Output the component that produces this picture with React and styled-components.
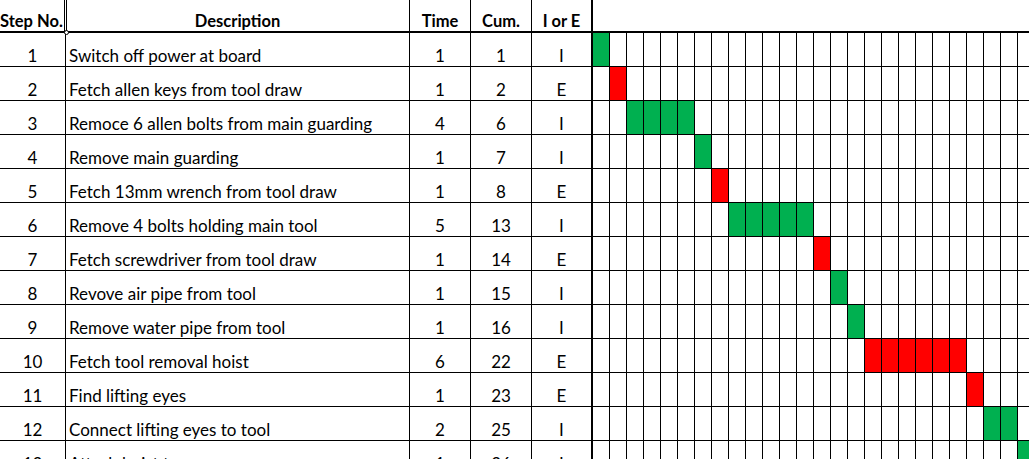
import React from 'react';
import styled, { createGlobalStyle } from 'styled-components';

const GlobalStyle = createGlobalStyle`
  html, body {
    margin: 0;
    padding: 0;
    background: #fff;
    overflow: hidden;
  }
  body {
    font-family: "Lato", "Liberation Sans", sans-serif;
    color: #000;
  }
`;

const GANTT_COLS = 26;
const GREEN = '#00b050';
const RED = '#ff0000';

const steps = [
  { desc: 'Switch off power at board', time: 1, type: 'I' },
  { desc: 'Fetch allen keys from tool draw', time: 1, type: 'E' },
  { desc: 'Remoce 6 allen bolts from main guarding', time: 4, type: 'I' },
  { desc: 'Remove main guarding', time: 1, type: 'I' },
  { desc: 'Fetch 13mm wrench from tool draw', time: 1, type: 'E' },
  { desc: 'Remove 4 bolts holding main tool', time: 5, type: 'I' },
  { desc: 'Fetch screwdriver from tool draw', time: 1, type: 'E' },
  { desc: 'Revove air pipe from tool', time: 1, type: 'I' },
  { desc: 'Remove water pipe from tool', time: 1, type: 'I' },
  { desc: 'Fetch tool removal hoist', time: 6, type: 'E' },
  { desc: 'Find lifting eyes', time: 1, type: 'E' },
  { desc: 'Connect lifting eyes to tool', time: 2, type: 'I' },
  { desc: 'Attach hoist to eyes', time: 1, type: 'I' },
];

const Sheet = styled.div`
  display: grid;
  grid-template-columns: 66px 344px 61px 61px 61px repeat(${GANTT_COLS}, 17px);
  grid-auto-rows: 34px;
  grid-template-rows: 33px;
  width: max-content;
  font-size: 17px;
  line-height: 1.15;
`;

const Cell = styled.div`
  box-sizing: border-box;
  border-right: ${(p) => (p.$thick ? 2 : 1)}px solid #000;
  border-bottom: 1px solid #000;
  display: flex;
  align-items: flex-end;
  justify-content: ${(p) => (p.$left ? 'flex-start' : 'center')};
  padding: 0 0 0 ${(p) => (p.$left ? '3px' : '0')};
  white-space: nowrap;
  overflow: visible;
`;

const HeadCell = styled(Cell)`
  font-weight: 700;
  font-size: 16.5px;
  border-bottom: 2px solid #000;
  padding-bottom: 0;
  position: relative;
`;

/* the step column header shows Excel's split-pane double line */
const HeadStep = styled(HeadCell)`
  justify-content: flex-start;
  padding-left: 0;
  border-right: none;
  &::before,
  &::after {
    content: '';
    position: absolute;
    top: 0;
    bottom: -1px;
    width: 1px;
    background: #000;
    z-index: 1;
  }
  &::before {
    right: 1px;
  }
  &::after {
    right: -1px;
  }
`;

const Marker = styled.span`
  position: absolute;
  right: -3px;
  bottom: -4px;
  width: 5px;
  height: 5px;
  box-sizing: border-box;
  border: 1px solid #000;
  border-radius: 50%;
  background: #fff;
  z-index: 2;
`;

const GanttHead = styled.div`
  grid-column: span ${GANTT_COLS};
  border-bottom: 2px solid #000;
`;

const Bar = styled.div`
  box-sizing: border-box;
  border-right: 1px solid #000;
  border-bottom: 1px solid #000;
  background: ${(p) => p.$fill || '#fff'};
`;

export default function App() {
  let cum = 0;
  const rows = steps.map((s, i) => {
    const start = cum;
    cum += s.time;
    return { ...s, n: i + 1, start, cum };
  });

  return (
    <>
      <GlobalStyle />
      <Sheet>
        <HeadStep>
          Step No.
          <Marker />
        </HeadStep>
        <HeadCell>Description</HeadCell>
        <HeadCell>Time</HeadCell>
        <HeadCell>Cum.</HeadCell>
        <HeadCell $thick>I or E</HeadCell>
        <GanttHead />
        {rows.map((r) => (
          <React.Fragment key={r.n}>
            <Cell>{r.n}</Cell>
            <Cell $left>{r.desc}</Cell>
            <Cell>{r.time}</Cell>
            <Cell>{r.cum}</Cell>
            <Cell $thick>{r.type}</Cell>
            {Array.from({ length: GANTT_COLS }, (_, c) => (
              <Bar
                key={c}
                $fill={c >= r.start && c < r.cum ? (r.type === 'I' ? GREEN : RED) : null}
              />
            ))}
          </React.Fragment>
        ))}
      </Sheet>
    </>
  );
}
